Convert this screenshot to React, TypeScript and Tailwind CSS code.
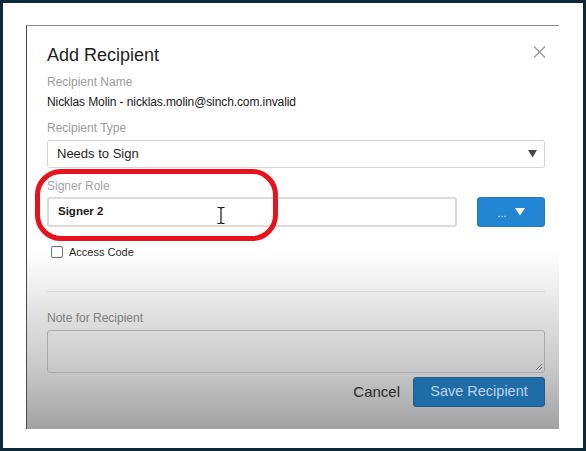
import React from 'react'

export default function App() {
  return (
    <div className="w-[586px] h-[451px] bg-[#0c2a3a] p-[3px] font-['Liberation_Sans',Arial,sans-serif]">
      <div className="w-full h-full bg-white pl-[23px] pt-[22px]">
        {/* Dialog */}
        <div className="relative w-[533px] h-[404px] border-l border-t border-l-[#4a4a4a] border-t-[#8a8a8a] bg-[linear-gradient(to_bottom,#ffffff_0%,#ffffff_56%,#ececec_66%,#dcdcdc_74%,#cbcbcb_84%,#a2a2a2_100%)] pl-[20px] pr-[14px] pt-[17px]">
          {/* Header */}
          <div className="flex items-center justify-between h-[24px]">
            <h2 className="text-[18px] leading-[24px] text-[#1e1e1e]">Add Recipient</h2>
            <svg width="13" height="12" viewBox="0 0 13 12" className="mr-[-1px] mt-[-6px]">
              <path d="M1 0.5 L12 11.5 M12 0.5 L1 11.5" stroke="#9c9c9c" strokeWidth="1.4" />
            </svg>
          </div>

          <div className="mt-[7px] text-[12px] leading-[16px] text-[#9b9b9b]">Recipient Name</div>
          <div className="mt-[4px] text-[12px] leading-[16px] text-[#1a1a1a] tracking-[-0.1px]">
            Nicklas Molin - nicklas.molin@sinch.com.invalid
          </div>

          <div className="mt-[10px] text-[12px] leading-[16px] text-[#9b9b9b]">Recipient Type</div>
          <div className="mt-[4px] h-[28px] flex items-center justify-between border border-[#d4d4d4] rounded-[3px] bg-white pl-[9px] pr-[7px]">
            <span className="text-[13px] text-[#1e1e1e]">Needs to Sign</span>
            <svg width="9" height="8" viewBox="0 0 9 8">
              <path d="M0 0 H9 L4.5 7.5 Z" fill="#4a4a4a" />
            </svg>
          </div>

          <div className="mt-[10px] text-[12px] leading-[16px] text-[#a3a3a3]">Signer Role</div>
          <div className="mt-[3px] h-[30px] flex gap-[20px]">
            <div className="w-[410px] h-full flex items-center border-2 border-[#dadada] rounded-[3px] bg-white pl-[9px]">
              <span className="text-[11.5px] font-bold text-[#1a1a1a]">Signer 2</span>
            </div>
            <button className="w-[68px] h-full flex items-center justify-center gap-[8px] rounded-[3px] bg-[#2286d2] border border-[#1f7cc2]">
              <span className="text-[11px] leading-none text-[#dceaf7] mt-[3px]">...</span>
              <svg width="10" height="8" viewBox="0 0 10 8">
                <path d="M0 0 H10 L5 7.5 Z" fill="#ffffff" />
              </svg>
            </button>
          </div>

          <label className="mt-[17px] h-[16px] flex items-center gap-[6px] pl-[4px]">
            <span className="w-[12px] h-[12px] border border-[#6f6f6f] rounded-[2px] bg-white" />
            <span className="text-[11px] text-[#2a2a2a]">Access Code</span>
          </label>

          <div className="mt-[31px] h-px bg-[#d5d5d5]" />

          <div className="mt-[18px] text-[12px] leading-[16px] text-[#7e7e7e]">Note for Recipient</div>
          <div className="relative mt-[4px] h-[43px] border border-[#a9a9a9] rounded-[3px]">
            <svg width="8" height="8" viewBox="0 0 8 8" className="absolute right-[1px] bottom-[1px]">
              <path d="M7 1 L1 7 M7 4 L4 7" stroke="#7a7a7a" strokeWidth="1" />
            </svg>
          </div>

          <div className="mt-[4px] h-[30px] flex items-center justify-end gap-[13px]">
            <span className="text-[15px] text-[#2b2b2b]">Cancel</span>
            <button className="w-[132px] h-full rounded-[3px] bg-[#1e6da6] border border-[#1b5f92] text-[14.5px] text-[#bcd5ea]">
              Save Recipient
            </button>
          </div>

          {/* Red annotation around signer role */}
          <div className="absolute left-[8px] top-[143px] w-[243px] h-[72px] border-[5px] border-[#e8121c] rounded-[26px]" />

          {/* Text cursor */}
          <svg width="8" height="17" viewBox="0 0 8 17" className="absolute left-[190px] top-[181px]">
            <path d="M0.5 0.5 H3 L4 1.5 L5 0.5 H7.5 M4 1.5 V15.5 M0.5 16.5 H3 L4 15.5 L5 16.5 H7.5" stroke="#1a1a1a" strokeWidth="1.2" fill="none" />
          </svg>
        </div>
      </div>
    </div>
  )
}
